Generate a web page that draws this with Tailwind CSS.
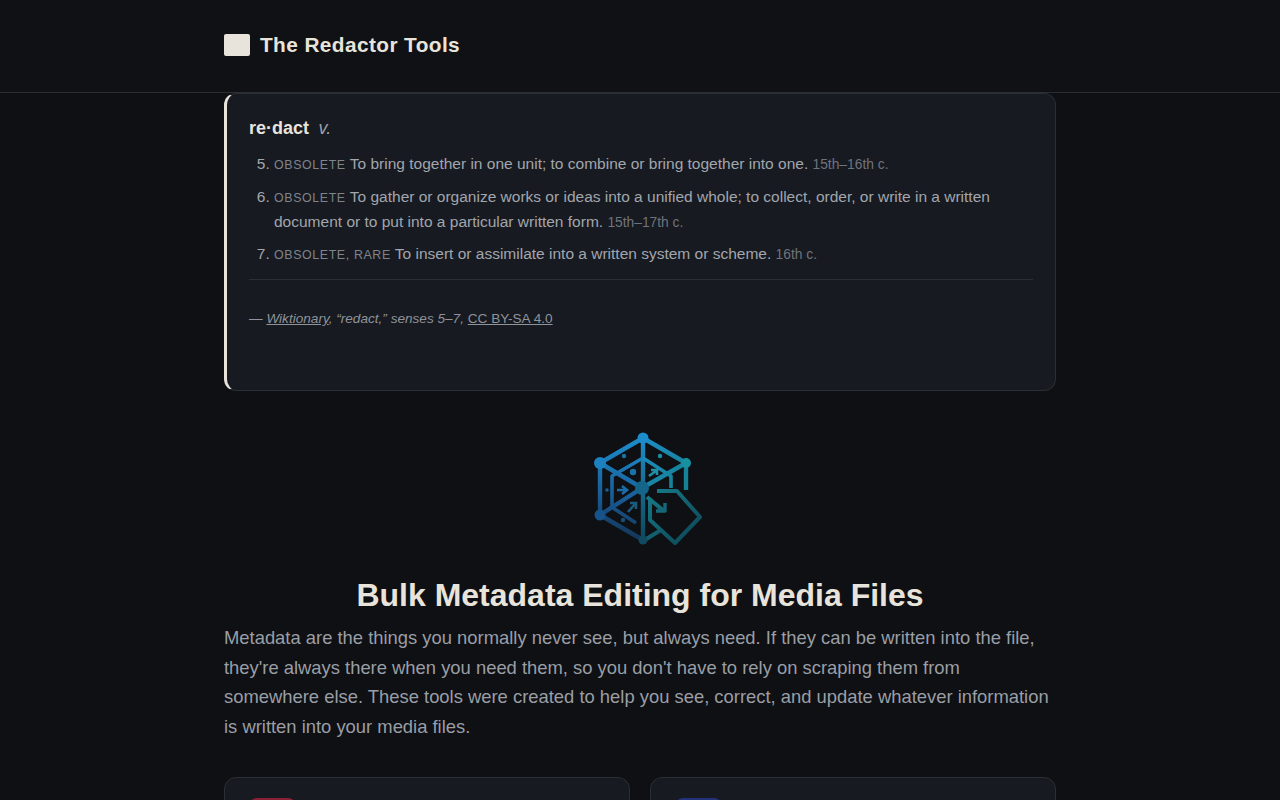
<!DOCTYPE html>
<html lang="en"><head><meta charset="utf-8"><title>The Redactor Tools</title>
<script src="https://cdn.jsdelivr.net/npm/@tailwindcss/browser@4"></script></head>
<body class="bg-[#0e1013] font-['Liberation_Sans',Arial,sans-serif] text-[#e8e4dc]">
<div class="h-[800px] overflow-hidden">
<header class="h-[93px] border-b border-[#2a2e35] bg-[#0f1114]">
  <div class="mx-auto w-[832px] h-[92px] flex items-center gap-[10px] pb-[3px]">
    <div class="w-[26px] h-[22px] rounded-[2px] bg-[#e8e4dc]"></div>
    <div class="text-[20.8px] font-bold tracking-[0.416px] leading-none pt-[2px]">The Redactor Tools</div>
  </div>
</header>
<main class="mx-auto w-[832px]">
  <section class="h-[298px] bg-[#171a21] border border-[#2a2e35] border-l-[3px] border-l-[#e8e4dc] rounded-[12px] pl-[22px] pr-[22px] pt-[23px]">
    <div class="flex items-baseline gap-[9.5px] text-[18px] leading-[22px]"><span class="font-bold">re·dact</span><span class="italic text-[#9a9ea6]">v.</span></div>
    <ol start="5" class="list-decimal pl-[25px] mt-[12px] text-[15.5px] leading-[25px] text-[#a2a6ad] border-b border-[#2a2e35] pb-[13px]">
      <li class="mb-[7.5px]"><span class="text-[12.4px] leading-none tracking-[0.62px] text-[#7f848b]">OBSOLETE</span> To bring together in one unit; to combine or bring together into one. <span class="text-[13.8px] leading-none text-[#6f747c]">15th–16th c.</span></li>
      <li class="mb-[7.5px]"><span class="text-[12.4px] leading-none tracking-[0.62px] text-[#7f848b]">OBSOLETE</span> To gather or organize works or ideas into a unified whole; to collect, order, or write in a written document or to put into a particular written form. <span class="text-[13.8px] leading-none text-[#6f747c]">15th–17th c.</span></li>
      <li><span class="text-[12.4px] leading-none tracking-[0.62px] text-[#7f848b]">OBSOLETE, RARE</span> To insert or assimilate into a written system or scheme. <span class="text-[13.8px] leading-none text-[#6f747c]">16th c.</span></li>
    </ol>
    <p class="mt-[28px] text-[13.6px] leading-[22px] italic text-[#8f939a]">— <a class="underline">Wiktionary</a>, “redact,” senses 5–7, <a class="underline not-italic">CC BY-SA 4.0</a></p>
  </section>
  <div class="flex justify-center mt-[37px] h-[120px]">
    <svg class="ml-[10px] blur-[0.5px]" width="120" height="120" viewBox="585 428 120 120" fill="none">
      <defs>
        <linearGradient id="h" gradientUnits="userSpaceOnUse" x1="625" y1="445" x2="612" y2="535"><stop offset="0" stop-color="#1d88c6"/><stop offset="0.55" stop-color="#195f9a"/><stop offset="1" stop-color="#14365a"/></linearGradient>
        <linearGradient id="g" gradientUnits="userSpaceOnUse" x1="645" y1="440" x2="690" y2="490"><stop offset="0" stop-color="#1c8cc4"/><stop offset="1" stop-color="#15808c"/></linearGradient>
        <linearGradient id="t" gradientUnits="userSpaceOnUse" x1="650" y1="490" x2="695" y2="545"><stop offset="0" stop-color="#177a88"/><stop offset="1" stop-color="#0d4555"/></linearGradient>
        <linearGradient id="c" gradientUnits="userSpaceOnUse" x1="643" y1="440" x2="643" y2="545"><stop offset="0" stop-color="#1c8cc8"/><stop offset="0.5" stop-color="#15688a"/><stop offset="1" stop-color="#0e4458"/></linearGradient>
      </defs>
      <g stroke="url(#h)" stroke-width="4.4" stroke-linejoin="round" stroke-linecap="butt">
        <path d="M643 438L600 463V515L643 540"/>
        <path d="M600 463L642 488L600 515"/>
        <path d="M643 458L612 476V507" stroke-width="3.6"/>
        <path d="M610 506L636 523" stroke-width="3.6"/>
      </g>
      <path d="M643 438V540" stroke="url(#c)" stroke-width="4.4"/>
      <g stroke="url(#g)" stroke-width="4.4" stroke-linejoin="round">
        <path d="M643 438L686 463V490"/>
        <path d="M686 463L642 488"/>
        <path d="M643 458L671 476V488" stroke-width="3.6"/>
      </g>
      <g stroke="url(#t)" stroke-width="4" stroke-linejoin="round">
        <path d="M643 541L661 530"/>
        <path d="M657 491H677L700 517L675 543L650 520V498"/>
        <path d="M647 497L664 511"/>
        <path d="M665 503V511H656" stroke-width="3.4"/>
      </g>
      <g stroke-width="2.6">
        <path d="M617 490H626M622 486L627 490L622 494" stroke="#1b6ca8"/>
        <path d="M649 476L656 471M651 470H657V475" stroke="#1f8fa8"/>
        <path d="M628 512L635 504M630 503H636V509" stroke="#195c7c"/>
      </g>
      <circle cx="643" cy="438" r="5.5" fill="#1d8ccc"/>
      <circle cx="600" cy="463" r="6" fill="#1d80c0"/>
      <circle cx="686" cy="463" r="5" fill="#17909f"/>
      <circle cx="600" cy="515" r="5.5" fill="#17538a"/>
      <circle cx="642" cy="488" r="7" fill="#15648a"/>
      <circle cx="643" cy="540" r="4.5" fill="#114a60"/>
      <circle cx="624" cy="456" r="2.2" fill="#1a73a8"/><circle cx="660" cy="456" r="2.2" fill="#1a8ea4"/><circle cx="633" cy="472" r="3.2" fill="#1a73a8"/><circle cx="623" cy="520" r="2.2" fill="#15507a"/><circle cx="607" cy="490" r="1.8" fill="#1a6098"/>
    </svg>
  </div>
  <h1 class="mt-[25px] text-center text-[32px] leading-[44px] font-bold">Bulk Metadata Editing for Media Files</h1>
  <p class="mt-[6px] text-[18.4px] leading-[29.5px] text-[#9a9ea6]">Metadata are the things you normally never see, but always need. If they can be written into the file, they're always there when you need them, so you don't have to rely on scraping them from somewhere else. These tools were created to help you see, correct, and update whatever information is written into your media files.</p>
  <div class="grid grid-cols-2 gap-[20px] mt-[36px]">
    <div class="h-[200px] rounded-[12px] bg-[#171a21] border border-[#2a2e35] pt-[20px] px-[24px]"><div class="w-[47px] h-[47px] rounded-[8px] bg-[#8a2035]"></div></div>
    <div class="h-[200px] rounded-[12px] bg-[#171a21] border border-[#2a2e35] pt-[20px] px-[24px]"><div class="w-[47px] h-[47px] rounded-[8px] bg-[#23327a]"></div></div>
  </div>
</main>
</div>
</body></html>
